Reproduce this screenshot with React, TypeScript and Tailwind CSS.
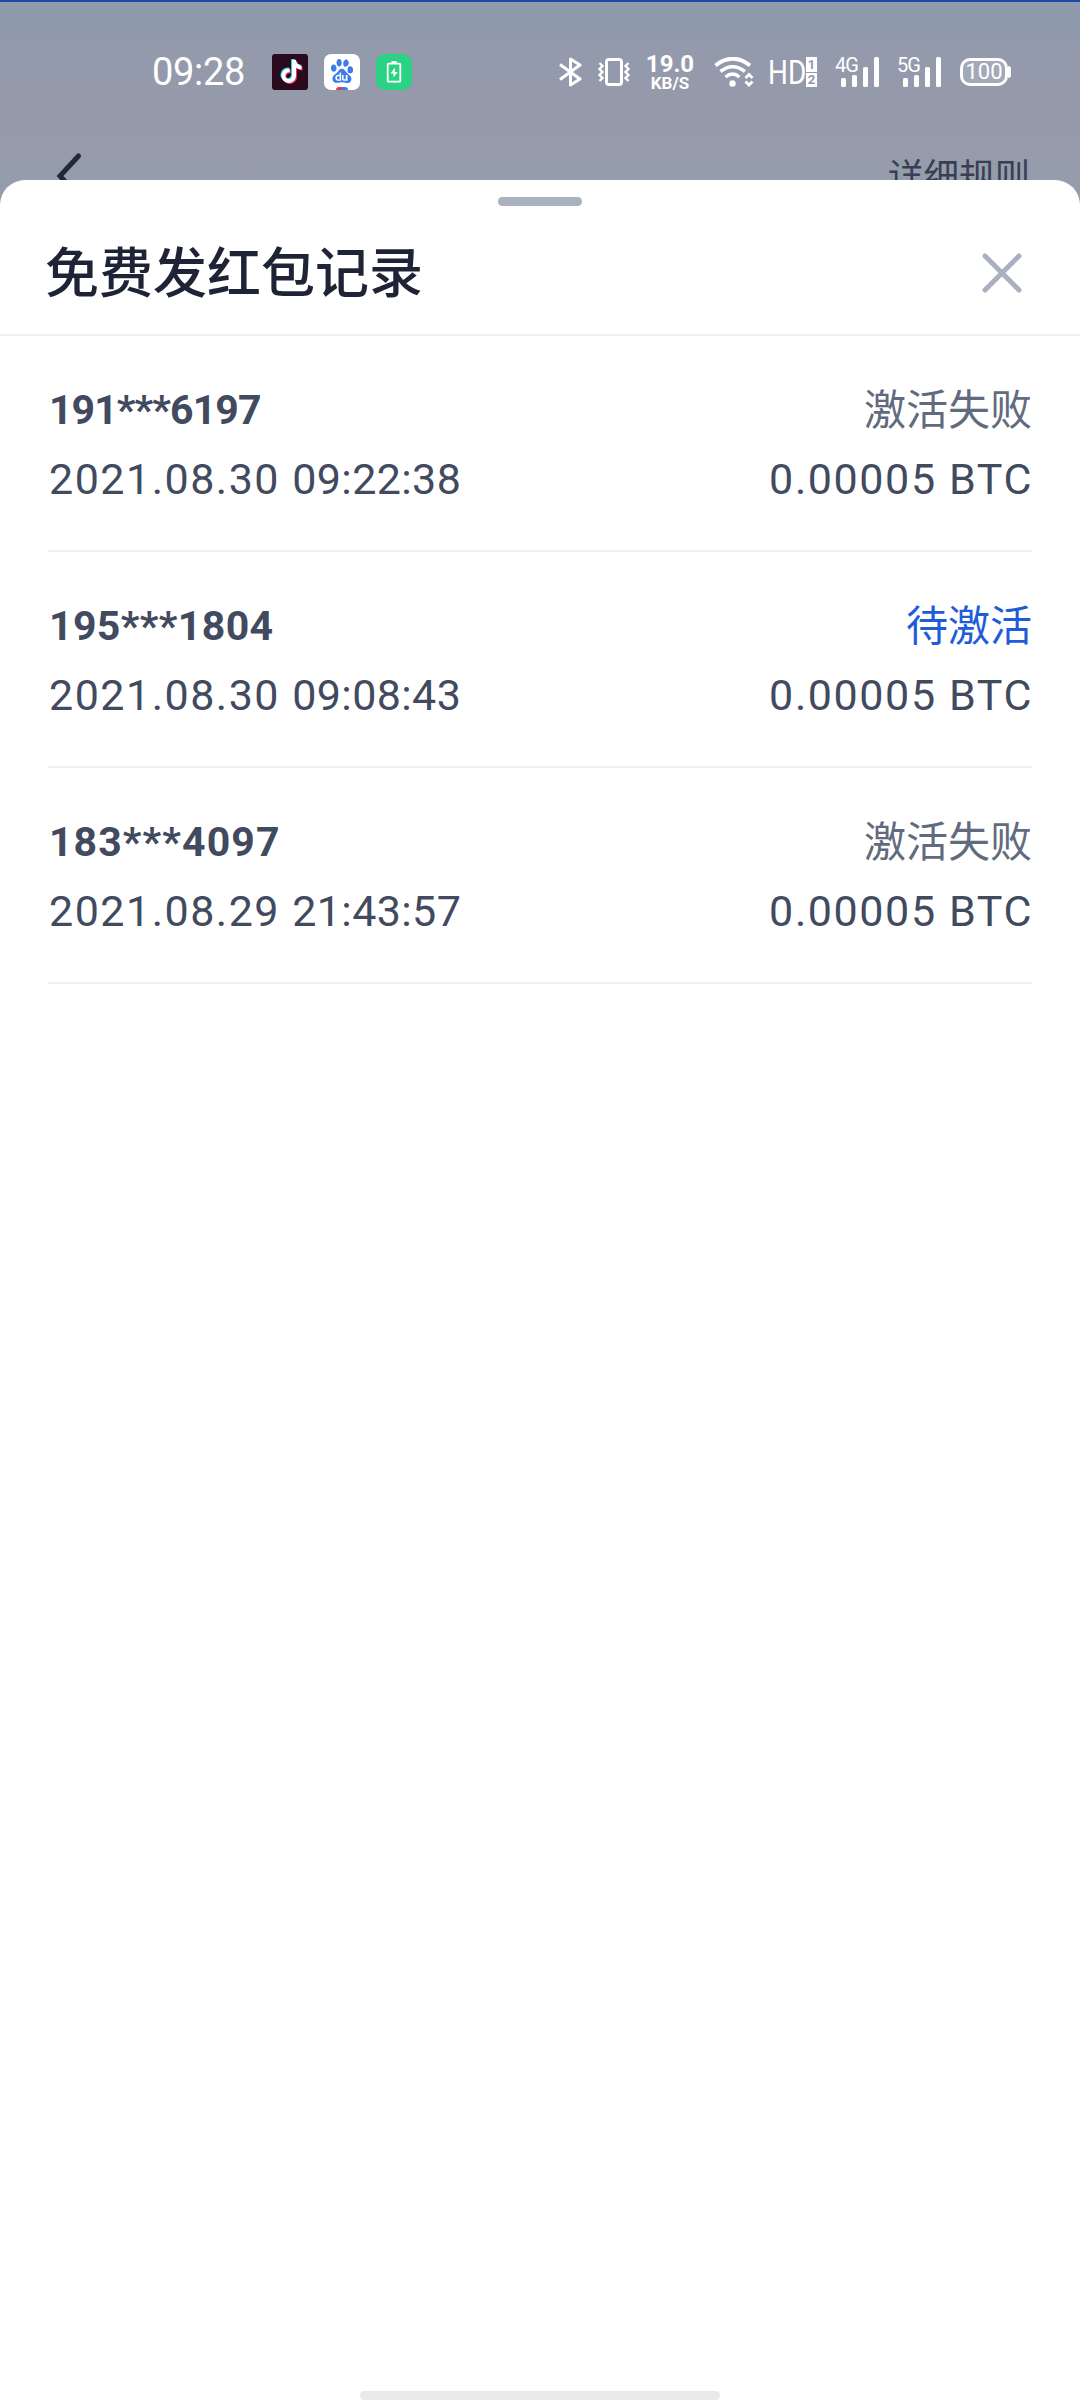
import { FaTiktok } from "react-icons/fa6";
import { SiBaidu } from "react-icons/si";

type RecordItem = {
  phone: string;
  phoneClass: string;
  date: string;
  time: string;
  status: "failed" | "pending";
  amount: string;
};

const records: RecordItem[] = [
  {
    phone: "191***6197",
    phoneClass: "tracking-[-0.9px]",
    date: "2021.08.30",
    time: "09:22:38",
    status: "failed",
    amount: "0.00005 BTC",
  },
  {
    phone: "195***1804",
    phoneClass: "tracking-[0.4px]",
    date: "2021.08.30",
    time: "09:08:43",
    status: "pending",
    amount: "0.00005 BTC",
  },
  {
    phone: "183***4097",
    phoneClass: "tracking-[1.1px]",
    date: "2021.08.29",
    time: "21:43:57",
    status: "failed",
    amount: "0.00005 BTC",
  },
];

function AppBadges() {
  return (
    <div className="ml-[25px] flex gap-4">
      <div className="grid size-9 place-items-center rounded-[3px] bg-[#2a0a1c]">
        <div className="relative h-6 w-[21px]">
          <FaTiktok className="absolute -top-px -left-px size-[23px] text-[#35e0e0]" />
          <FaTiktok className="absolute top-px left-px size-[23px] text-[#f02c56]" />
          <FaTiktok className="absolute top-0 left-0 size-[23px] text-white" />
        </div>
      </div>
      <div className="flex size-9 flex-col items-center justify-between overflow-hidden rounded-[7px] bg-white pt-[5px]">
        <SiBaidu className="size-6 text-[#3f7bea]" />
        <div className="flex h-[3px] w-3 overflow-hidden rounded-t-sm">
          <div className="flex-1 bg-[#d8404a]" />
          <div className="flex-1 bg-[#3f7bea]" />
        </div>
      </div>
      <div className="grid size-9 place-items-center rounded-[9px] bg-[#2bd283]">
        <svg className="size-9" viewBox="0 0 36 36" fill="none">
          <rect x="11.7" y="9.7" width="12.6" height="18" rx="1" stroke="white" strokeWidth="1.8" />
          <rect x="15.5" y="7" width="5" height="3" fill="white" />
          <path d="M19 13.5l-4.5 6h3v4l4.2-5.6h-2.9z" fill="white" />
        </svg>
      </div>
    </div>
  );
}

function Signal({ label }: { label: string }) {
  return (
    <div className="relative h-[30px] w-[45px]">
      <span className="absolute -top-[2px] left-0 text-[20px] leading-[20px] tracking-[-1px]">{label}</span>
      <svg className="h-[30px] w-[45px]" viewBox="0 0 45 30" fill="white">
        <rect x="6" y="21" width="5" height="9" rx="1.5" />
        <rect x="17" y="18" width="5" height="12" rx="1.5" />
        <rect x="28" y="10" width="5" height="20" rx="1.5" />
        <rect x="39" y="0" width="5" height="30" rx="1.5" />
      </svg>
    </div>
  );
}

function StatusBar() {
  return (
    <div className="flex h-[140px] items-center pl-[152px] text-white">
      <span className="w-[95px] text-[38px] leading-9 tracking-[-0.3px] whitespace-nowrap">09:28</span>
      <AppBadges />
      <div className="ml-[146px] flex items-center">
        {/* Bluetooth */}
        <svg className="h-[30px] w-[25px]" viewBox="0 0 25 30" fill="none" stroke="white" strokeWidth="3">
          <path d="M2 7.5L22 22L12.5 28V2L22 8L2 22.5" strokeLinejoin="round" />
        </svg>
        {/* Vibrate */}
        <svg className="ml-[15px] h-[30px] w-8" viewBox="0 0 32 30" fill="none" stroke="white">
          <rect x="8.5" y="2.5" width="15" height="25" rx="2.5" strokeWidth="3" />
          <path
            d="M1.5 6l3 3-3 3 3 3-3 3 3 3-3 3M30.5 6l-3 3 3 3-3 3 3 3-3 3 3 3"
            strokeWidth="2.4"
          />
        </svg>
        <div className="ml-4 flex w-[48px] flex-col items-center font-bold">
          <span className="text-[24px] leading-[18px]">19.0</span>
          <span className="mt-[3px] text-[17px] leading-[14px]">KB/S</span>
        </div>
        {/* Wi-Fi */}
        <svg className="ml-5 h-[30px] w-10" viewBox="0 0 40 30" fill="none" stroke="white">
          <path d="M1.5 8.5Q18.5-5 36 8.5" strokeWidth="4" />
          <path d="M6.5 14.5Q18.5 5 31 14.5" strokeWidth="3.6" />
          <path d="M11.5 20Q18.5 14 25.5 20" strokeWidth="3.4" />
          <circle cx="18.5" cy="26.5" r="3.2" fill="white" stroke="none" />
          <path d="M31.5 21l3.5-3.5 3.5 3.5M31.5 24.5l3.5 3.5 3.5-3.5" strokeWidth="2.8" />
        </svg>
        <div className="ml-[14px] flex items-center">
          <span className="w-[38px] origin-left scale-x-[0.82] text-[34px] leading-[30px]">HD</span>
          <div className="flex flex-col gap-px text-[13px] leading-[15px] font-bold text-[#8f98aa]">
            <span className="h-[15px] w-[11px] bg-white text-center">1</span>
            <span className="h-[14px] w-[11px] bg-white text-center leading-[14px]">2</span>
          </div>
        </div>
        <div className="ml-[18px] flex gap-[17px]">
          <Signal label="4G" />
          <Signal label="5G" />
        </div>
        {/* Battery */}
        <div className="ml-[18px] flex items-center">
          <div className="grid h-7 w-[48px] place-items-center rounded-[10px] border-[3px] border-white bg-white/15 text-[22px] leading-[22px]">
            100
          </div>
          <div className="h-3 w-[3px] rounded-r-sm bg-white" />
        </div>
      </div>
    </div>
  );
}

function Backdrop() {
  return (
    <div className="h-[180px] overflow-hidden border-t-2 border-[#1f4ba6]">
      <StatusBar />
      <div className="flex h-[62px] justify-between pr-[50px] pl-14">
        <svg className="mt-[11px] h-11 w-7" viewBox="0 0 28 44" fill="none">
          <path d="M22.5 3L4 23l18.5 20" stroke="#212839" strokeWidth="5" strokeLinecap="round" />
        </svg>
        <span className="mt-[15px] text-[35.5px] leading-[40px] text-[#373f51]">详细规则</span>
      </div>
    </div>
  );
}

function RecordRow({ record }: { record: RecordItem }) {
  return (
    <li className="flex h-[216px] flex-col border-b-2 border-[#eef0f5] pt-[50px] text-[#414a5e]">
      <div className="flex h-[50px] items-center justify-between">
        <span className={`pl-px text-[41px] font-bold ${record.phoneClass}`}>{record.phone}</span>
        {record.status === "failed" ? (
          <span className="text-[42px] leading-[50px] text-[#626b7d]">激活失败</span>
        ) : (
          <span className="text-[42px] leading-[50px] text-[#1f5cd7]">待激活</span>
        )}
      </div>
      <div className="mt-[18px] flex h-[50px] items-center justify-between text-[43px]">
        <span className="pl-px tracking-[1.5px]">
          {record.date} <span className="tracking-[0.4px]">{record.time}</span>
        </span>
        <span className="-mr-px tracking-[1.6px]">{record.amount}</span>
      </div>
    </li>
  );
}

export default function App() {
  return (
    <main className="flex h-[2400px] w-[1080px] flex-col overflow-hidden bg-linear-to-b from-[#8e9aad] via-[#959aab] via-[90px] to-[#959cac] to-[200px] font-['Roboto','Noto_Sans_CJK_SC',sans-serif]">
      <Backdrop />
      <section className="flex flex-1 flex-col items-center rounded-t-[25px] bg-white">
        <header className="flex h-[156px] w-full flex-col items-center border-b-2 border-[#eef0f5] pt-[17px]">
          <div className="h-[9px] w-[84px] rounded-full bg-[#a9b1c0]" />
          <div className="mt-[27px] flex h-20 w-full items-center justify-between pr-[56px] pl-[45px]">
            <h1 className="pt-1 text-[54px] leading-20 font-medium text-[#1e2435]">免费发红包记录</h1>
            <svg className="size-11" viewBox="0 0 44 44" fill="none" stroke="#a9b1c0" strokeWidth="5" strokeLinecap="round">
              <path d="M5 5l34 34M39 5L5 39" />
            </svg>
          </div>
        </header>
        <ul className="w-full flex-1 px-12">
          {records.map((record) => (
            <RecordRow key={record.phone} record={record} />
          ))}
        </ul>
        <div className="h-[9px] w-[360px] rounded-full bg-[#e9e9e9]" />
      </section>
    </main>
  );
}
